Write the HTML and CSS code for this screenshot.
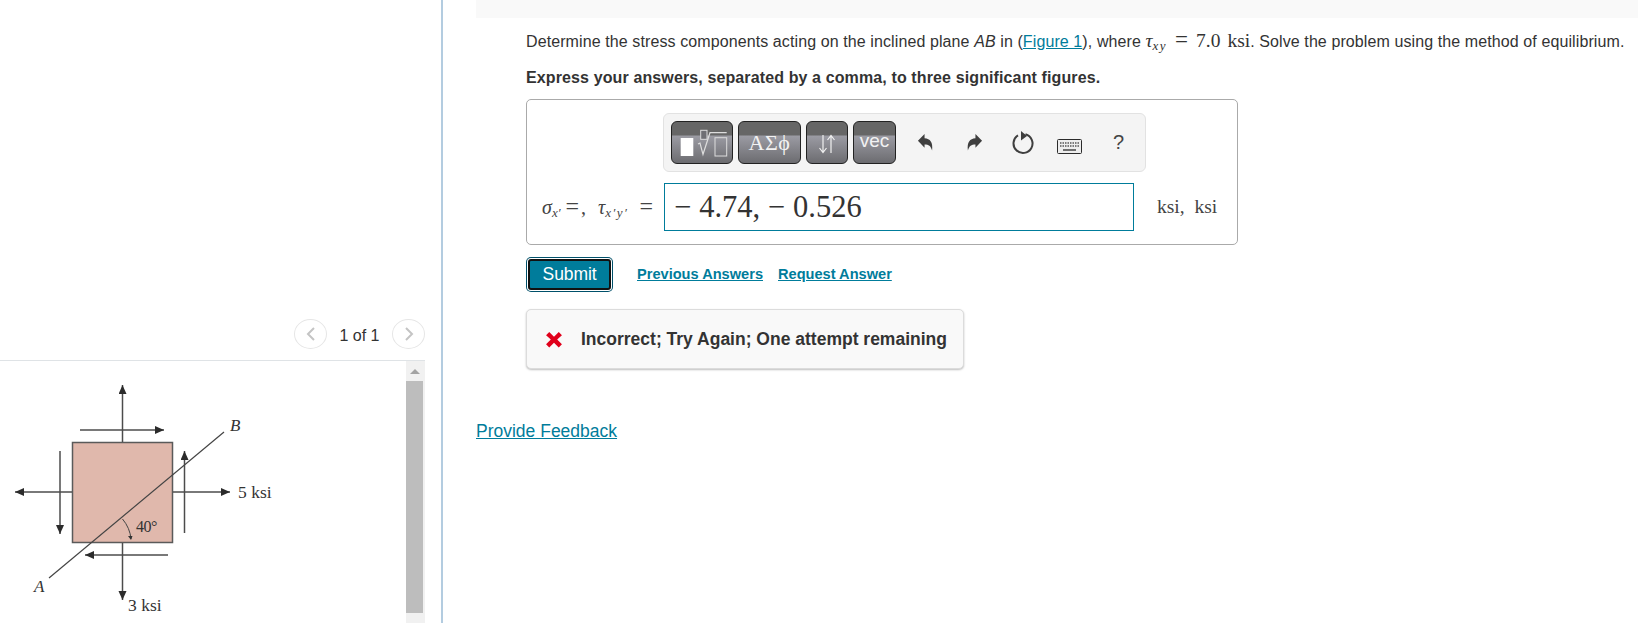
FILE: index.html
```html
<!DOCTYPE html>
<html lang="en">
  <head>
    <meta charset="UTF-8" />
    <title>Stress components</title>
    <link rel="stylesheet" href="styles.css">
  </head>
  <body>
    <div class="page">
      <aside class="figurePane">
        <div class="pager">
          <button class="pagerBtn" aria-label="Previous">
            <svg width="10" height="16" viewBox="0 0 10 16"><path d="M8 2 2 8l6 6" /></svg>
          </button>
          <span class="pagerText">1 of 1</span>
          <button class="pagerBtn" aria-label="Next">
            <svg width="10" height="16" viewBox="0 0 10 16"><path d="M2 2l6 6-6 6" /></svg>
          </button>
        </div>
        <div class="figureFrame">
          <svg class="figure" width="406" height="262" viewBox="0 1 406 262">
            <defs>
              <marker id="tip" markerUnits="userSpaceOnUse" markerWidth="10" markerHeight="10" refX="9" refY="4" orient="auto">
                <path d="M0 0 9 4 0 8z" fill="#2b2b2b" />
              </marker>
            </defs>
            <rect x="72.500" y="82.500" width="100" height="100" fill="#e0b8ac" stroke="#5a5a5a" stroke-width="1.500" />
            <g fill="none" stroke="#4c4c4c" stroke-width="1.500">
              <path d="M122.500 82V25" marker-end="url(#tip)" />
              <path d="M80 70H164" marker-end="url(#tip)" />
              <path d="M184.500 173V91" marker-end="url(#tip)" />
              <path d="M60 91V174" marker-end="url(#tip)" />
              <path d="M168 195H85" marker-end="url(#tip)" />
              <path d="M173 132H230" marker-end="url(#tip)" />
              <path d="M72 132H15" marker-end="url(#tip)" />
              <path d="M122.500 183V240" marker-end="url(#tip)" />
            </g>
            <path d="M49 218 224 72" fill="none" stroke="#444" stroke-width="1.200" />
            <path d="M122.500 159Q130 168 131 179" fill="none" stroke="#444" stroke-width="1" />
            <path d="M128 176l3 4 1.500-4z" fill="#333" />
            <text class="figItalic" x="230" y="71">B</text>
            <text class="figItalic" x="34" y="232">A</text>
            <text class="figLabel" x="238" y="138">5 ksi</text>
            <text class="figLabel" x="128" y="251">3 ksi</text>
            <text class="figLabel figSmall" x="136" y="172">40°</text>
          </svg>
          <div class="scrollbar">
            <span class="scrollUp"></span>
            <span class="scrollThumb"></span>
          </div>
        </div>
      </aside>

      <main class="content">
        <div class="topBar"></div>
        <div class="question">
          <p class="prompt">
            Determine the stress components acting on the inclined plane <i>AB</i> in
            (<a href="#">Figure 1</a>), where
            <span class="math"><i>τ</i><sub>xy</sub><span class="mathEq">=</span>7.0<span class="mathUnit">ksi</span></span>. Solve the problem using the method of equilibrium.
          </p>
          <p class="instruction">Express your answers, separated by a comma, to three significant figures.</p>

          <div class="answerBox">
            <div class="toolbar">
              <button class="tool toolTemplates" aria-label="Templates">
                <svg width="52" height="38" viewBox="0 0 52 38">
                  <rect x="4.700" y="14" width="12.600" height="18" fill="#fff" />
                  <path d="M22 20l2-1 3 11.300L34 8.700H50.700" fill="none" stroke="#ddd" stroke-width="1.200" />
                  <rect x="24.700" y="6.300" width="6.300" height="9" fill="#6f6f74" stroke="#ddd" />
                  <rect x="39" y="13.700" width="11.700" height="18.300" fill="none" stroke="#ddd" />
                </svg>
              </button>
              <button class="tool toolGreek">ΑΣϕ</button>
              <button class="tool toolArrows" aria-label="Arrows">
                <svg width="20" height="20" viewBox="0 0 20 20">
                  <path d="M6 1V18M2.500 14 6 18.500 9.500 14M14 19V2M10.500 6 14 1.500 17.500 6" fill="none" stroke="#f0f0f0" stroke-width="1.200" />
                </svg>
              </button>
              <button class="tool toolVec">vec</button>
              <div class="actions">
                <svg width="17" height="20" viewBox="0 0 18 21"><path d="M1 8 8 1v4.500c6 .5 9 4 8 13-1.500-5-3.500-6.500-8-6.500v3.500z" fill="#3f3f3f" /></svg>
                <svg class="actionRedo" width="17" height="20" viewBox="0 0 18 21"><path d="M17 8 10 1v4.500c-6 .5-9 4-8 13 1.500-5 3.500-6.500 8-6.500v3.500z" fill="#3f3f3f" /></svg>
                <svg class="actionReset" width="22" height="24" viewBox="0 0 22 24"><path d="M13.500 3.300A9.500 9.500 0 1 1 6 4.400" fill="none" stroke="#3f3f3f" stroke-width="2" /><path d="M9 0l6 5-6 4.500z" fill="#3f3f3f" /></svg>
                <svg class="actionKeys" width="25" height="15" viewBox="0 0 25 15">
                  <rect x=".5" y=".5" width="24" height="14" rx="1" fill="#eeeeee" stroke="#2b2b2b" />
                  <path d="M3 4H22M3 7H22" stroke="#555" stroke-width="1.500" stroke-dasharray="1.500 1" fill="none" />
                  <path d="M6 11H19" stroke="#444" stroke-width="1.500" fill="none" />
                </svg>
                <span class="help">?</span>
              </div>
            </div>
            <div class="answerRow">
              <span class="answerLabel"><i>σ</i><sub>x′</sub><span class="labelEq">=</span><span class="labelComma">,</span><i class="labelTau">τ</i><sub class="labelSubWide">x′y′</sub><span class="labelEq labelEqLast">=</span></span>
              <div class="answerInput"><span class="minus">−</span>4.74, <span class="minus">−</span>0.526</div>
              <span class="answerUnit">ksi, ksi</span>
            </div>
          </div>

          <div class="submitRow">
            <button class="submitBtn">Submit</button>
            <a class="smallLink" href="#">Previous Answers</a>
            <a class="smallLink" href="#">Request Answer</a>
          </div>

          <div class="feedback">
            <svg width="18" height="17" viewBox="0 0 17 16"><path d="M1 4 4 1l4.500 4.500L13 1l3 3-4.500 4L16 12.500 13 15.500 8.500 11 4 15.500 1 12.500 5.500 8z" fill="#e0001b" /></svg>
            <span>Incorrect; Try Again; One attempt remaining</span>
          </div>
        </div>
        <a class="provide" href="#">Provide Feedback</a>
      </main>
    </div>
  </body>
</html>
```

FILE: styles.css
```css
* {
  margin: 0;
  padding: 0;
  box-sizing: border-box;
}

html,
body {
  height: 623px;
  overflow: hidden;
}

body {
  background: #ffffff;
  color: #333333;
  font-family: "Liberation Sans", Arial, sans-serif;
}

a {
  color: #007c9b;
}

button {
  font-family: inherit;
  cursor: pointer;
}

.page {
  display: flex;
  height: 623px;
}

/* left column with the figure */
.figurePane {
  width: 443px;
  flex: none;
  padding-top: 319px;
  border-right: 2px solid #b3cce0;
  display: flex;
  flex-direction: column;
}

.pager {
  width: 425px;
  height: 41px;
  display: flex;
  justify-content: flex-end;
  align-items: flex-start;
}

.pagerBtn {
  width: 33px;
  height: 30px;
  border: 1px solid #e6e6e6;
  border-radius: 50%;
  background: #fff;
  display: flex;
  align-items: center;
  justify-content: center;
}

.pagerBtn svg path {
  fill: none;
  stroke: #c4c4c4;
  stroke-width: 2;
}

.pagerText {
  width: 65px;
  text-align: center;
  font-size: 16px;
  line-height: 34px;
}

.figureFrame {
  width: 425px;
  flex: 1;
  border-top: 1px solid #dfe3e6;
  display: flex;
  min-height: 0;
}

.figure {
  display: block;
  width: 406px;
  flex: none;
}

.figLabel,
.figItalic {
  font-family: "Liberation Serif", serif;
  font-size: 17.5px;
  fill: #333;
}

.figSmall {
  font-size: 16px;
  letter-spacing: -0.5px;
}

.figItalic {
  font-style: italic;
  font-size: 17px;
}

.scrollbar {
  width: 19px;
  background: #f1f1f1;
  display: flex;
  flex-direction: column;
  align-items: flex-start;
}

.scrollUp {
  margin: 8px 0 0 4px;
  border-left: 5px solid transparent;
  border-right: 5px solid transparent;
  border-bottom: 5px solid #a3a3a3;
}

.scrollThumb {
  width: 17px;
  height: 232px;
  margin-top: 7px;
  background: #bdbdbd;
}

/* right column */
.content {
  flex: 1;
  min-width: 0;
  padding-left: 33px;
}

.topBar {
  height: 18px;
  background: #f9f9f9;
}

.question {
  padding-left: 50px;
}

.prompt {
  margin-top: 8px;
  height: 30px;
  font-size: 16px;
  letter-spacing: 0.1px;
  line-height: 30px;
  white-space: nowrap;
}

.math {
  font-family: "Liberation Serif", serif;
  font-size: 19.5px;
  letter-spacing: 0;
}

.math sub {
  font-size: 13px;
  font-style: italic;
  line-height: 0;
  vertical-align: -3px;
  letter-spacing: 1.5px;
}

.mathEq {
  margin: 0 8px 0 8px;
  font-size: 23px;
  line-height: 0;
}

.mathUnit {
  margin-left: 7px;
}

.instruction {
  margin-top: 12px;
  font-size: 16px;
  letter-spacing: 0.12px;
  line-height: 20px;
  font-weight: 700;
}

.answerBox {
  width: 712px;
  height: 146px;
  margin-top: 11px;
  padding: 13px 0 0 136px;
  border: 1px solid #aaaaaa;
  border-radius: 5px;
}

.toolbar {
  width: 483px;
  height: 59px;
  padding: 7px 0 0 7px;
  background: #f4f4f4;
  border: 1px solid #e2e2e2;
  border-radius: 6px;
  display: flex;
  gap: 5px;
}

.tool {
  height: 43px;
  border: 1px solid #222;
  border-radius: 6px;
  color: #f2f2f2;
  background: linear-gradient(#666 0, #666 13px, #9b9ba3 14px, #6c6c70 100%);
  display: flex;
  align-items: center;
  justify-content: center;
}

.toolTemplates {
  width: 62px;
}

.toolGreek {
  width: 63px;
  font-family: "Liberation Serif", serif;
  font-size: 22px;
  letter-spacing: 0.5px;
}

.toolArrows {
  width: 42px;
  padding-top: 3px;
}

.toolVec {
  width: 43px;
  font-size: 19px;
  padding-bottom: 3px;
}

.actions {
  margin-left: 16px;
  height: 43px;
  display: flex;
  align-items: center;
}

.actionRedo {
  margin-left: 32px;
}

.actionReset {
  margin-left: 29px;
}

.actionKeys {
  margin: 7px 0 0 23px;
}

.help {
  margin-left: 31px;
  font-size: 20px;
  color: #444;
}

.answerRow {
  margin: 11px 0 0 -122px;
  display: flex;
  align-items: center;
}

.answerLabel {
  width: 123px;
  padding-right: 11px;
  text-align: right;
  font-family: "Liberation Serif", serif;
  font-size: 20px;
  color: #444;
  white-space: nowrap;
}

.answerLabel sub {
  font-size: 13px;
  font-style: italic;
  line-height: 0;
  vertical-align: -3px;
}

.answerLabel .labelSubWide {
  letter-spacing: 1.5px;
}

.labelEq {
  margin-left: 5px;
  font-size: 24px;
  line-height: 0;
}

.labelEqLast {
  margin-left: 11px;
}

.labelComma {
  margin-left: 2px;
}

.labelTau {
  margin-left: 12px;
}

.answerInput {
  width: 470px;
  height: 48px;
  padding-left: 9px;
  border: 1px solid #007c9b;
  font-family: "Liberation Serif", serif;
  font-size: 30.5px;
  line-height: 46px;
  color: #333;
}

.minus {
  margin-right: 8px;
}

.answerUnit {
  margin-left: 23px;
  font-family: "Liberation Serif", serif;
  font-size: 19.5px;
  word-spacing: 5px;
  color: #444;
}

.submitRow {
  margin-top: 14px;
  padding-left: 2px;
  display: flex;
  align-items: center;
}

.submitBtn {
  width: 83px;
  height: 31px;
  margin-right: 26px;
  border: 2px solid #111;
  border-radius: 3px;
  box-shadow: 0 0 0 1px #fff, 0 0 0 2px #00506a;
  background: #007c9b;
  color: #fff;
  font-size: 17.5px;
  letter-spacing: -0.1px;
}

.smallLink {
  margin: 0 15px 2px 0;
  font-size: 14.6px;
  font-weight: 700;
}

.feedback {
  width: 438px;
  height: 60px;
  margin-top: 19px;
  padding-left: 18px;
  border: 1px solid #dcdcdc;
  border-radius: 5px;
  background: #f9f9f9;
  box-shadow: 0 1px 2px rgba(0, 0, 0, 0.25);
  display: flex;
  align-items: center;
  gap: 18px;
  font-size: 17.5px;
  font-weight: 700;
  white-space: nowrap;
}

.provide {
  display: inline-block;
  margin-top: 51px;
  font-size: 17.5px;
  line-height: 22px;
}
```
